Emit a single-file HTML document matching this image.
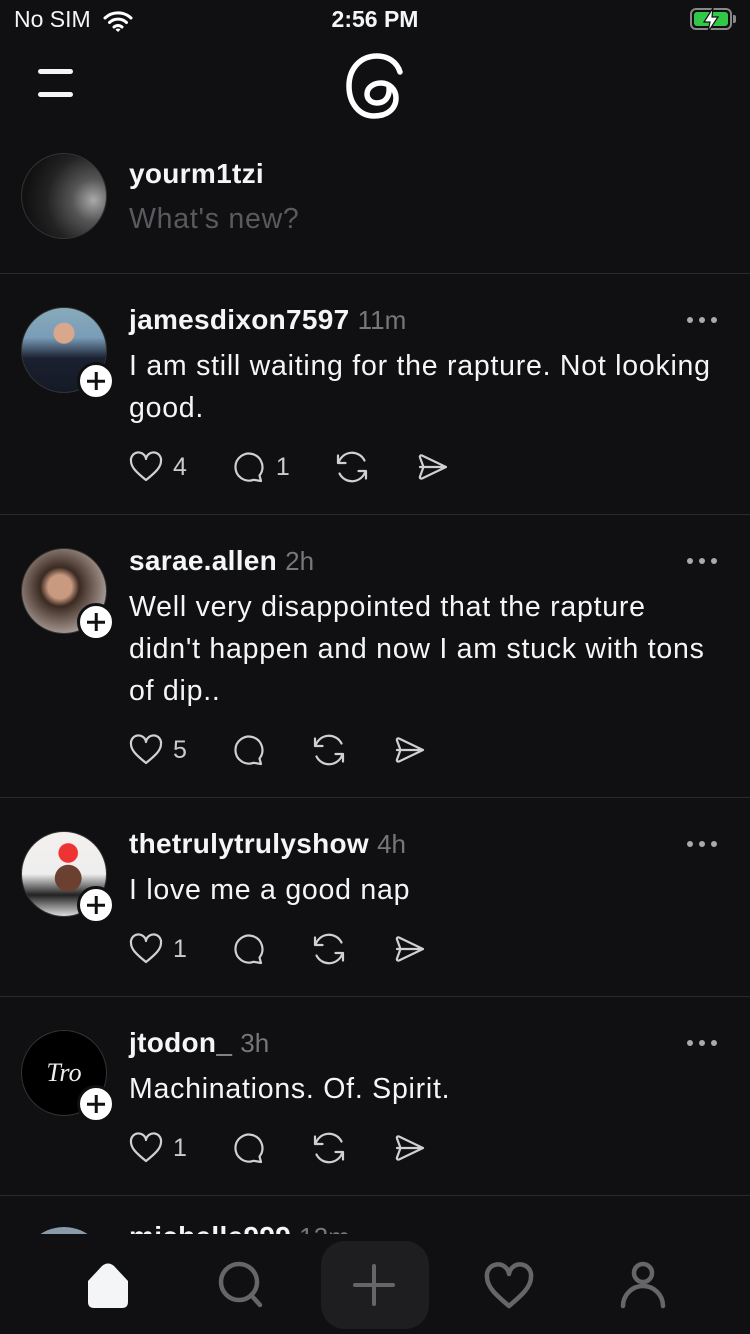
<!DOCTYPE html>
<html><head><meta charset="utf-8"><style>
*{margin:0;padding:0;box-sizing:border-box}
body{width:750px;height:1334px;background:#101012;color:#f3f5f7;font-family:"Liberation Sans",sans-serif;position:relative;overflow:hidden}
.a{position:absolute}
.name{position:absolute;left:129px;font-size:28px;font-weight:700;line-height:42px;white-space:nowrap;letter-spacing:0.3px}
.name span{font-weight:400;color:#777;font-size:26px;letter-spacing:0}
.txt{position:absolute;left:129px;font-size:28.5px;line-height:42px;color:#f3f5f7;width:620px;white-space:nowrap;letter-spacing:0.75px}
.av{position:absolute;left:21px;width:86px;height:86px;border-radius:50%;border:1px solid #333;overflow:hidden}
.plus{position:absolute;left:77px;width:38px;height:38px;border-radius:50%;background:#fff;border:3px solid #101012}
.plus:before,.plus:after{content:"";position:absolute;background:#111;left:50%;top:50%;transform:translate(-50%,-50%)}
.plus:before{width:18px;height:2.5px}.plus:after{width:2.5px;height:18px}
.div{position:absolute;left:0;width:750px;height:1px;background:#2a2a2d}
.dots{position:absolute;left:686px}
.act{position:absolute;left:128px;display:flex;align-items:center;height:40px}
.act svg{width:36px;height:36px;fill:none;stroke:#d0d0d0;stroke-width:2.2;stroke-linecap:round;stroke-linejoin:round}
.act .n{font-size:25px;color:#ccc;margin-left:9px}
.act .g{margin-left:44px}
</style></head><body>
<!-- status bar -->
<div class="a" style="left:14px;top:6px;font-size:23px">No SIM</div>
<svg class="a" style="left:103px;top:10px" width="30" height="22" viewBox="0 0 30 22"><path d="M2 8a19 19 0 0 1 26 0M6.5 12.5a12.5 12.5 0 0 1 17 0M11 17a6 6 0 0 1 8 0" stroke="#fff" stroke-width="3" fill="none" stroke-linecap="round"/><path d="M12.5 19.5l2.5 2.5 2.5-2.5a3.5 3.5 0 0 0-5 0z" fill="#fff"/></svg>
<div class="a" style="left:0;width:750px;text-align:center;top:6px;font-size:23px;font-weight:700">2:56 PM</div>
<div class="a" style="left:690px;top:8px;width:42px;height:22px;border:2px solid #888;border-radius:6px;padding:2px"><div style="width:100%;height:100%;background:#33c748;border-radius:3px"></div></div>
<div class="a" style="left:733px;top:15px;width:3px;height:8px;background:#888;border-radius:0 2px 2px 0"></div>
<svg class="a" style="left:700px;top:7px" width="22" height="26" viewBox="0 0 22 26"><path d="M13 1L4 15h6l-2 10 10-15h-6z" fill="#fff" stroke="#101012" stroke-width="1.2"/></svg>
<!-- header -->
<div class="a" style="left:38px;top:69px;width:35px;height:5px;background:#f3f5f7;border-radius:3px"></div>
<div class="a" style="left:38px;top:92px;width:35px;height:5px;background:#f3f5f7;border-radius:3px"></div>
<svg class="a" style="left:340px;top:50px" width="70" height="70" viewBox="0 0 70 70"><path d="M60 22C57 12 48 6 37 6 20 6 9 19 9 36s10 30 25 30c13 0 22-7 22-18 0-9-7-15-15-15-8 0-14 5-14 11s5 9 10 9c8 0 13-6 12-16" fill="none" stroke="#fff" stroke-width="5.5" stroke-linecap="round"/></svg>
<!-- compose -->
<div class="av" style="top:153px;background:radial-gradient(circle at 85% 55%,#aaa 0%,#555 25%,#222 55%,#111 80%)"></div>
<div class="name" style="top:153px">yourm1tzi</div>
<div class="txt" style="top:198px;color:#5a5a5e">What's new?</div>
<div class="div" style="top:273px"></div>

<!-- post 1 -->
<div class="av" style="top:307px;background:radial-gradient(circle at 50% 30%,#d9a88c 0 14%,transparent 15%),linear-gradient(180deg,#8ab 0%,#7a9db8 35%,#1a2030 60%,#141a25 100%)"></div>
<div class="plus" style="top:362px"></div>
<div class="name" style="top:299px">jamesdixon7597 <span>11m</span></div>
<svg class="dots" style="top:315px" width="32" height="10" viewBox="0 0 32 10"><circle cx="4" cy="5" r="3" fill="#aaa"/><circle cx="16" cy="5" r="3" fill="#aaa"/><circle cx="28" cy="5" r="3" fill="#aaa"/></svg>
<div class="txt" style="top:345px">I am still waiting for the rapture. Not looking<br>good.</div>
<div class="act" style="top:447px">
<svg viewBox="0 0 36 36"><path d="M18 31C8 23 3 18 3 12a7.5 7.5 0 0 1 15-2 7.5 7.5 0 0 1 15 2c0 6-5 11-15 19z"/></svg><span class="n">4</span>
<svg class="g" viewBox="0 0 36 36"><path d="M28.5 26.5A13.5 13.5 0 1 0 22.5 30.8L30 32Z"/></svg><span class="n">1</span>
<svg class="g" viewBox="0 0 36 36"><path d="M4.5 14A14 14 0 0 1 30.5 11.5M31.5 22A14 14 0 0 1 5.5 24.5M4 6.5v7.5h7.5M32 29.5v-7.5h-7.5"/></svg>
<svg class="g" viewBox="0 0 36 36"><path d="M6 18h26L8 6.5C6.5 6 5.5 7 6 8.5L9.5 18 6 27.5C5.5 29 6.5 30 8 29.5L32 18"/></svg>
</div>
<div class="div" style="top:514px"></div>

<!-- post 2 -->
<div class="av" style="top:548px;background:radial-gradient(circle at 45% 45%,#c99a80 0 18%,#3a2a22 30%,#887870 60%,#ccc 90%)"></div>
<div class="plus" style="top:603px"></div>
<div class="name" style="top:540px">sarae.allen <span>2h</span></div>
<svg class="dots" style="top:556px" width="32" height="10" viewBox="0 0 32 10"><circle cx="4" cy="5" r="3" fill="#aaa"/><circle cx="16" cy="5" r="3" fill="#aaa"/><circle cx="28" cy="5" r="3" fill="#aaa"/></svg>
<div class="txt" style="top:586px">Well very disappointed that the rapture<br>didn't happen and now I am stuck with tons<br>of dip..</div>
<div class="act" style="top:730px">
<svg viewBox="0 0 36 36"><path d="M18 31C8 23 3 18 3 12a7.5 7.5 0 0 1 15-2 7.5 7.5 0 0 1 15 2c0 6-5 11-15 19z"/></svg><span class="n">5</span>
<svg class="g" viewBox="0 0 36 36"><path d="M28.5 26.5A13.5 13.5 0 1 0 22.5 30.8L30 32Z"/></svg>
<svg class="g" viewBox="0 0 36 36"><path d="M4.5 14A14 14 0 0 1 30.5 11.5M31.5 22A14 14 0 0 1 5.5 24.5M4 6.5v7.5h7.5M32 29.5v-7.5h-7.5"/></svg>
<svg class="g" viewBox="0 0 36 36"><path d="M6 18h26L8 6.5C6.5 6 5.5 7 6 8.5L9.5 18 6 27.5C5.5 29 6.5 30 8 29.5L32 18"/></svg>
</div>
<div class="div" style="top:797px"></div>

<!-- post 3 -->
<div class="av" style="top:831px;background:radial-gradient(circle at 55% 25%,#e33 0 12%,transparent 13%),radial-gradient(circle at 55% 55%,#6b4030 0 20%,transparent 21%),linear-gradient(180deg,#f4f0ee 0%,#eee 50%,#222 75%,#ddd 100%)"></div>
<div class="plus" style="top:886px"></div>
<div class="name" style="top:823px">thetrulytrulyshow <span>4h</span></div>
<svg class="dots" style="top:839px" width="32" height="10" viewBox="0 0 32 10"><circle cx="4" cy="5" r="3" fill="#aaa"/><circle cx="16" cy="5" r="3" fill="#aaa"/><circle cx="28" cy="5" r="3" fill="#aaa"/></svg>
<div class="txt" style="top:869px">I love me a good nap</div>
<div class="act" style="top:929px">
<svg viewBox="0 0 36 36"><path d="M18 31C8 23 3 18 3 12a7.5 7.5 0 0 1 15-2 7.5 7.5 0 0 1 15 2c0 6-5 11-15 19z"/></svg><span class="n">1</span>
<svg class="g" viewBox="0 0 36 36"><path d="M28.5 26.5A13.5 13.5 0 1 0 22.5 30.8L30 32Z"/></svg>
<svg class="g" viewBox="0 0 36 36"><path d="M4.5 14A14 14 0 0 1 30.5 11.5M31.5 22A14 14 0 0 1 5.5 24.5M4 6.5v7.5h7.5M32 29.5v-7.5h-7.5"/></svg>
<svg class="g" viewBox="0 0 36 36"><path d="M6 18h26L8 6.5C6.5 6 5.5 7 6 8.5L9.5 18 6 27.5C5.5 29 6.5 30 8 29.5L32 18"/></svg>
</div>
<div class="div" style="top:996px"></div>

<!-- post 4 -->
<div class="av" style="top:1030px;background:#000;display:flex;align-items:center;justify-content:center;color:#eee;font-family:'Liberation Serif',serif;font-style:italic;font-size:26px">Tro</div>
<div class="plus" style="top:1085px"></div>
<div class="name" style="top:1022px">jtodon_ <span>3h</span></div>
<svg class="dots" style="top:1038px" width="32" height="10" viewBox="0 0 32 10"><circle cx="4" cy="5" r="3" fill="#aaa"/><circle cx="16" cy="5" r="3" fill="#aaa"/><circle cx="28" cy="5" r="3" fill="#aaa"/></svg>
<div class="txt" style="top:1068px">Machinations. Of. Spirit.</div>
<div class="act" style="top:1128px">
<svg viewBox="0 0 36 36"><path d="M18 31C8 23 3 18 3 12a7.5 7.5 0 0 1 15-2 7.5 7.5 0 0 1 15 2c0 6-5 11-15 19z"/></svg><span class="n">1</span>
<svg class="g" viewBox="0 0 36 36"><path d="M28.5 26.5A13.5 13.5 0 1 0 22.5 30.8L30 32Z"/></svg>
<svg class="g" viewBox="0 0 36 36"><path d="M4.5 14A14 14 0 0 1 30.5 11.5M31.5 22A14 14 0 0 1 5.5 24.5M4 6.5v7.5h7.5M32 29.5v-7.5h-7.5"/></svg>
<svg class="g" viewBox="0 0 36 36"><path d="M6 18h26L8 6.5C6.5 6 5.5 7 6 8.5L9.5 18 6 27.5C5.5 29 6.5 30 8 29.5L32 18"/></svg>
</div>
<div class="div" style="top:1195px"></div>

<!-- partial post 5 -->
<div class="a" style="left:0;top:1220px;width:750px;height:14px;overflow:hidden">
<div class="a" style="left:21px;top:7px;width:86px;height:86px;border-radius:50%;background:#8a9aa8"></div>
<div class="name" style="top:-4px">michelle999 <span>12m</span></div>
</div>
<!-- tab bar -->
<div class="a" style="left:0;top:1234px;width:750px;height:100px;background:#101012"></div>
<svg class="a" style="left:84px;top:1262px" width="48" height="48" viewBox="0 0 48 48"><path d="M4 19L18 4q6-5 12 0l14 15v21q0 6-6 6H10q-6 0-6-6z" fill="#f3f5f7"/></svg>
<svg class="a" style="left:216px;top:1260px" width="50" height="50" viewBox="0 0 50 50"><circle cx="23" cy="22" r="18" fill="none" stroke="#666" stroke-width="4.5"/><path d="M35 35l9 10" stroke="#666" stroke-width="4.5" stroke-linecap="round"/></svg>
<div class="a" style="left:321px;top:1241px;width:108px;height:88px;border-radius:24px;background:#1e1e20"></div>
<div class="a" style="left:353px;top:1283px;width:42px;height:4px;background:#666;border-radius:2px"></div>
<div class="a" style="left:372px;top:1264px;width:4px;height:42px;background:#666;border-radius:2px"></div>
<svg class="a" style="left:484px;top:1260px" width="50" height="50" viewBox="0 0 50 50"><path d="M25 46C12 35 3 27 3 17a11 11 0 0 1 22-3 11 11 0 0 1 22 3c0 10-9 18-22 29z" fill="none" stroke="#666" stroke-width="4.5" stroke-linejoin="round"/></svg>
<svg class="a" style="left:618px;top:1260px" width="50" height="50" viewBox="0 0 50 50"><circle cx="25" cy="13" r="9" fill="none" stroke="#666" stroke-width="4.5"/><path d="M5 46a20 20 0 0 1 40 0" fill="none" stroke="#666" stroke-width="4.5" stroke-linecap="round"/></svg>
</body></html>
